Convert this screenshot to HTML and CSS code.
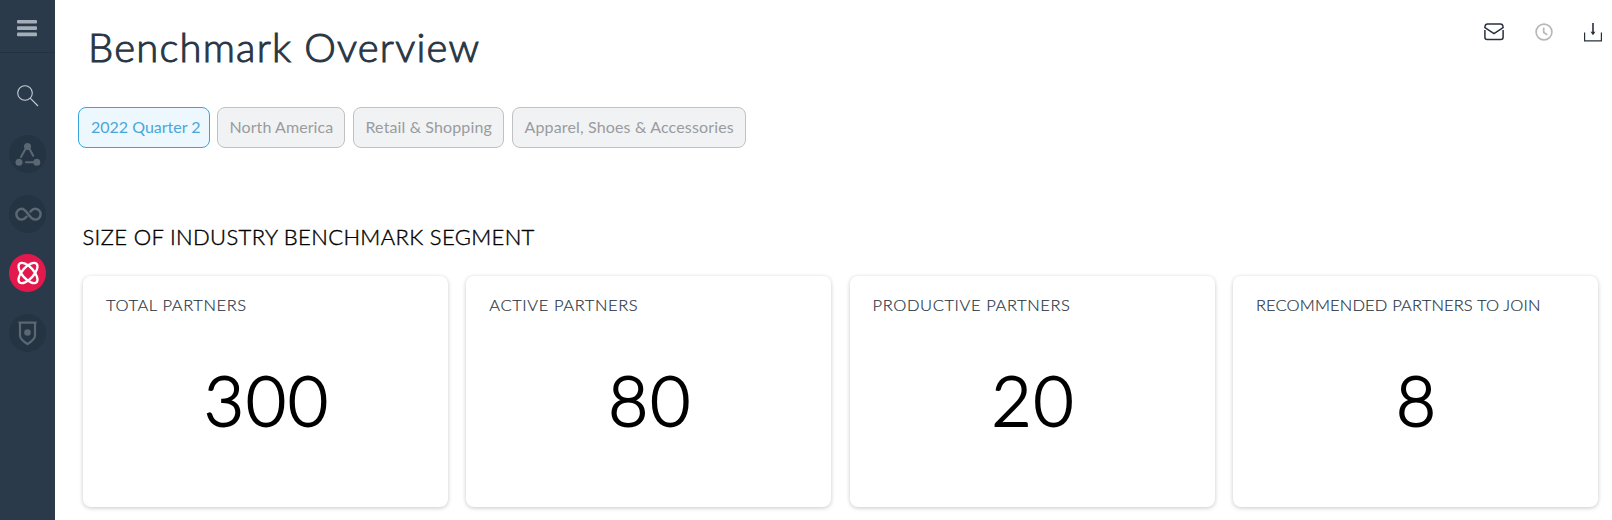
FILE: index.html
```html
<!DOCTYPE html>
<html lang="en">
<head>
<meta charset="utf-8">
<title>Benchmark Overview</title>
<link rel="stylesheet" href="styles.css">
</head>
<body>
<div class="app">
  <nav class="sidebar">
    <div class="menu">
      <svg width="20" height="18" viewBox="0 0 20 18" fill="#a3aeb8"><rect y="1" width="20" height="3.6" rx="1"/><rect y="7.3" width="20" height="3.6" rx="1"/><rect y="13.6" width="20" height="3.6" rx="1"/></svg>
    </div>
    <div class="search">
      <svg width="22" height="22" viewBox="0 0 22 22" fill="none" stroke="#c6ced5" stroke-width="1.1"><circle cx="8" cy="8" r="7.3"/><path d="M13.2 13.2L21 21"/></svg>
    </div>
    <div class="nav-item">
      <svg width="37" height="38" viewBox="0 0 37 38" fill="#5b6772" stroke="#5b6772" stroke-width="2.1" stroke-linecap="round"><path d="M16.2 14.5L12 22M20.8 14.5l3.4 6.2M26.5 27.3H17"/><g stroke="none"><circle cx="18.5" cy="11.5" r="3.5"/><circle cx="10" cy="27.2" r="3.5"/><circle cx="27.8" cy="27.2" r="3.5"/></g></svg>
    </div>
    <div class="nav-item">
      <svg width="37" height="38" viewBox="0 0 37 38" fill="none" stroke="#5b6772" stroke-width="2.5" stroke-linecap="round"><path d="M17.5 21.8c-1.4 1.8-2.8 2.8-4.7 2.8a5.3 5.3 0 0 1 0-10.8c5.2 0 7.2 10.8 13.4 10.8a5.3 5.3 0 0 0 0-10.8c-1.9 0-3.3 1-4.7 2.8"/></svg>
    </div>
    <div class="nav-item active">
      <svg width="37" height="38" viewBox="0 0 37 38" fill="none" stroke="#fff" stroke-width="2.3"><ellipse cx="19" cy="19" rx="12.6" ry="5.8" transform="rotate(48 19 19)"/><ellipse cx="19" cy="19" rx="12.6" ry="5.8" transform="rotate(-48 19 19)"/></svg>
    </div>
    <div class="nav-item">
      <svg width="37" height="38" viewBox="0 0 37 38" fill="none" stroke="#5b6772" stroke-width="2.2"><path d="M9.5 8.7h18M11 8.5v13c0 4 4.5 6.7 7.5 8.5c3-1.8 7.5-4.5 7.5-8.5v-13"/><circle cx="18.5" cy="18.5" r="3.3" fill="#5b6772" stroke="none"/></svg>
    </div>
  </nav>
  <main class="main">
    <header class="header">
      <h1 class="title">Benchmark Overview</h1>
      <div class="actions">
        <svg width="20" height="18" viewBox="0 0 20 18" fill="none" stroke="#28303c" stroke-width="1.5"><path d="M.9 4.6Q.9 1 3.7 1h12.6q2.8 0 2.8 3.6L10 10.7zM.9 7v7.2Q.9 16.5 3.2 16.5h13.6q2.3 0 2.3-2.3V7"/></svg>
        <svg width="18" height="18" viewBox="0 0 18 18" fill="none" stroke="#b7b8ba" stroke-width="1.7"><circle cx="9" cy="9" r="7.9"/><path d="M8.7 4.5v5l3.6 2.3"/></svg>
        <svg width="18" height="19" viewBox="0 0 18 19" fill="none" stroke="#28303c" stroke-width="1.2"><path d="M.6 9.5v8.3h16.8V9.5"/><path d="M9 0v10" stroke-width="1.6"/><path d="M6.6 8.8h4.8L9 12.2z" fill="#28303c" stroke="none"/></svg>
      </div>
    </header>
    <div class="filters">
      <span class="pill selected">2022 Quarter 2</span>
      <span class="pill region">North America</span>
      <span class="pill sector">Retail &amp; Shopping</span>
      <span class="pill category">Apparel, Shoes &amp; Accessories</span>
    </div>
    <h2 class="section-title">SIZE OF INDUSTRY BENCHMARK SEGMENT</h2>
    <section class="cards">
      <article class="card"><h3 class="label">TOTAL PARTNERS</h3><p class="value">300</p></article>
      <article class="card"><h3 class="label">ACTIVE PARTNERS</h3><p class="value">80</p></article>
      <article class="card"><h3 class="label">PRODUCTIVE PARTNERS</h3><p class="value">20</p></article>
      <article class="card"><h3 class="label wide">RECOMMENDED PARTNERS TO JOIN</h3><p class="value">8</p></article>
    </section>
  </main>
</div>
</body>
</html>
```
FILE: styles.css
```css
* { box-sizing: border-box; }
body { margin: 0; background: #fff; font-family: Lato, "Open Sans", sans-serif; overflow: hidden; }
h1, h2, h3, p { margin: 0; font-weight: 300; white-space: nowrap; }
svg { display: block; }
.app { display: flex; height: 520px; }
.sidebar { width: 55px; flex: none; background: #2a3a4a; display: flex; flex-direction: column; }
.menu { height: 53px; border-bottom: 1px solid #223240; padding: 19px 0 0 17px; }
.search { height: 82px; padding: 32px 0 0 17px; }
.nav-item { width: 37px; height: 38px; margin: 0 0 21.5px 9px; border-radius: 50%; background: #243442; }
.nav-item.active { background: #e3194d; }
.main { flex: 1; padding-left: 23px; }
.header { height: 107px; display: flex; justify-content: space-between; padding: 20px 10px 0 10px; }
.title { font-size: 40px; line-height: 54px; color: #283645; letter-spacing: 1.2px; -webkit-text-stroke: 1px #283645; }
.actions { display: flex; gap: 31px; align-items: flex-start; padding-top: 3px; }
.filters { display: flex; gap: 8px; }
.pill { width: 132px; height: 41px; border: 1px solid #bfc1c2; border-radius: 8px; background: #f1f2f4; color: #999c9f; font-size: 16px; line-height: 38px; padding-left: 11.5px; white-space: nowrap; }
.pill.selected { border-color: #35a5dc; background: #edf8fe; color: #4ba6d8; padding-left: 12px; margin-right: -1px; }
.pill.region { width: 128px; letter-spacing: .08px; }
.pill.sector { width: 151px; letter-spacing: .12px; }
.pill.category { width: 234px; letter-spacing: .15px; }
.section-title { margin: 74px 0 0 4.5px; font-size: 22px; line-height: 30px; color: #000; letter-spacing: .35px; -webkit-text-stroke: .4px #000; }
.cards { display: grid; grid-template-columns: repeat(4, 365px); gap: 18.3px; margin: 24px 0 0 5px; }
.card { height: 231px; border-radius: 8px; background: #fff; box-shadow: 0 1px 4px rgba(0, 0, 0, .22); padding: 17px 0 0 23px; }
.label { font-size: 16.5px; line-height: 24px; color: #283645; letter-spacing: .6px; -webkit-text-stroke: .2px #283645; }
.label.wide { letter-spacing: .15px; }
.value { margin: 35px 23px 0 0; padding-left: 3px; text-align: center; font-size: 69px; line-height: 96px; color: #000; letter-spacing: 2px; -webkit-text-stroke: 1.8px #000; }
```
